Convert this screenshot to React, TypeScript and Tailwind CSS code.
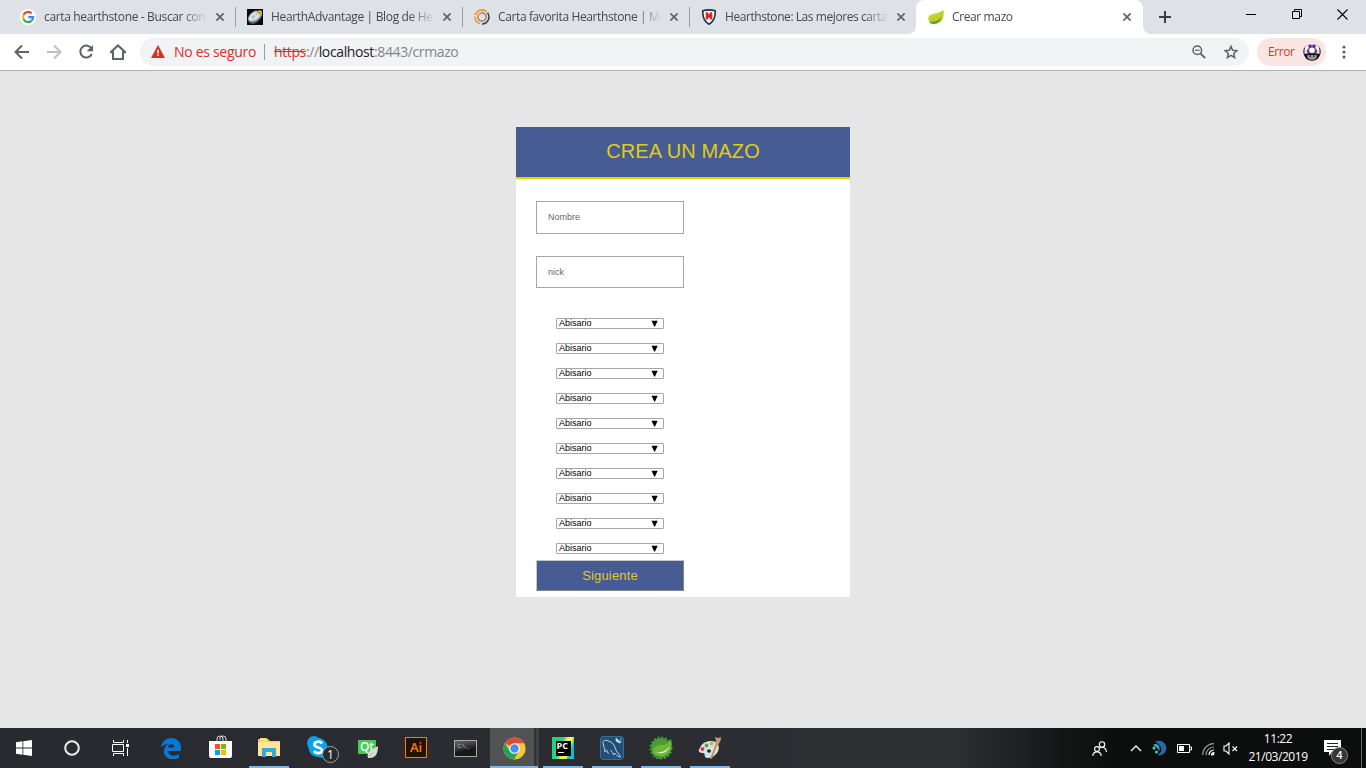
import React from "react";

const Close = () => (
  <svg width="8" height="8" viewBox="0 0 8 8" className="shrink-0" stroke="#5f6368" strokeWidth="1.7">
    <path d="M.4 .4 7.6 7.6M7.6 .4 .4 7.6" />
  </svg>
);

const GoogleIcon = () => (
  <svg width="16" height="16" viewBox="0 0 16 16" fill="none" strokeWidth="2.2">
    <circle cx="8" cy="8" r="8" fill="#fff" />
    <path d="M11.6 4.400A5.100 5.100 0 0 0 3.500 5.700" stroke="#ea4335" />
    <path d="M3.500 5.700a5.100 5.100 0 0 0 0 4.600" stroke="#fbbc05" />
    <path d="M3.500 10.300a5.100 5.100 0 0 0 7.900 1.500" stroke="#34a853" />
    <path d="M11.400 11.800A5.100 5.100 0 0 0 13.100 8.200H8.200" stroke="#4285f4" />
  </svg>
);

const StoneIcon = () => (
  <svg width="16" height="16" viewBox="0 0 16 16">
    <path fill="#080808" d="M0 0h16v16H0z" />
    <path d="M1 9Q3 3 9 1.500L14 3l1 3q-2 6-9 7.500Q1 15 1 9Z" fill="#a9b1b5" />
    <path d="M2 9Q4 4 9 3l4 3-3 4-7 2z" fill="#dce6ea" />
    <path d="m4 8 3-2 2 1-3 3zM9 4l2 1-2 2z" fill="#9fc4d6" />
    <path d="M10 2l3-1 2 1v4l-3-1z" fill="#c9a52a" />
    <path d="m2 12 4 1q5-1 8-6-1 6-8 8-4 0-4-3z" fill="#555b60" />
  </svg>
);

const RingIcon = () => (
  <svg width="16" height="16" viewBox="0 0 16 16" fill="none" strokeWidth="1.5">
    <path d="M6 14.6A7 7 0 0 1 1 7.500M1.200 6A7 7 0 0 1 12.600 2.700" stroke="#f7941d" />
    <path d="M13.500 3.800A7 7 0 0 1 8 15" stroke="#3b3b3b" />
    <circle cx="8" cy="8" r="4.100" stroke="#8b8680" />
    <path d="M3.900 8A4.100 4.100 0 0 1 8 3.900" stroke="#f7a13b" />
  </svg>
);

const ShieldIcon = () => (
  <svg width="16" height="16" viewBox="0 0 16 16">
    <path d="M1.800 1.800Q8 0 14.200 1.800q.6 9.700-6.200 13.400Q1.200 11.500 1.800 1.800Z" fill="#fff" stroke="#14304d" strokeWidth="1.600" />
    <path d="M4.700 3.300h2.100L8 5.800l1.200-2.500h2.100v7.200H9.100V8.200L8 9.500 6.900 8.200v2.300H4.700z" fill="#e2231a" />
  </svg>
);

const LeafIcon = () => (
  <svg width="16" height="16" viewBox="0 0 16 16">
    <path d="M15.300 .5c1.500 7.200-1 13.800-7.400 14.200-4 .3-7-.9-7.500-4.200C-.4 2.800 11.500 6 15.300.5Z" fill="#bfd02c" />
    <path d="M1.500 12.800c5.700.3 9.500-1.300 12.100-5-1.500 5.300-5.700 8.300-11 6.700Z" fill="#5b9e32" />
    <path d="M1 8.500C3 5 10 6.500 14 3 10 7 4 6 1 8.500Z" fill="#d9e341" />
  </svg>
);

type TabProps = { icon: React.ReactNode; title: string; spacing: string; divider?: boolean };
const Tab = ({ icon, title, spacing, divider = true }: TabProps) => (
  <div className="relative flex h-[34px] w-[227px] items-center pl-[11px] pr-[12px]">
    <span className="flex shrink-0">{icon}</span>
    <div className="ml-2 min-w-0 flex-1 whitespace-nowrap mask-[linear-gradient(to_right,#000_138px,transparent_164px)]">
      <span className={`block text-[12px] leading-[18px] text-[#45494d] ${spacing}`}>{title}</span>
    </div>
    <span className="ml-[4px] flex"><Close /></span>
    {divider && <span className="absolute right-0 top-[7px] h-5 w-px bg-[#9a9da1]" />}
  </div>
);

const Mushroom = () => (
  <svg width="18" height="18" viewBox="0 0 18 18">
    <circle cx="9" cy="9" r="8.700" fill="#171419" />
    <path d="M1.500 11V7A7.500 7.500 0 0 1 16.500 7v4z" fill="#f4f0f7" />
    <path d="M5 2 8 1.300 9 3l1-1.700L13 2l-.8 3 2.300 3-1.700 3H5.200L3.500 8l2.300-3z" fill="#6d2f96" />
    <circle cx="9" cy="7.300" r="2.800" fill="#fff" />
    <path d="M2 10.500h14v1.700H2z" fill="#171419" />
    <path d="M4.500 12h9v2.500l-2 2h-5l-2-2z" fill="#aaa" />
    <path d="M6.700 12h1.200v2.500H6.700zM10.100 12h1.200v2.500h-1.200z" fill="#171419" />
  </svg>
);

const Toolbar = () => (
  <div className="flex h-[37px] items-center border-b border-[#b0b0b0] bg-white">
    <svg className="ml-[14px]" width="16" height="16" viewBox="0 0 16 16" fill="none" stroke="#5f6368" strokeWidth="2"><path d="M15 8H2M8 1.500 1.500 8 8 14.500" /></svg>
    <svg className="ml-4" width="16" height="16" viewBox="0 0 16 16" fill="none" stroke="#bdbfc2" strokeWidth="2"><path d="M1 8h13M8 1.500 14.500 8 8 14.500" /></svg>
    <svg className="ml-4" width="16" height="16" viewBox="0 0 16 16" fill="none" stroke="#5f6368" strokeWidth="2"><path d="M13.600 4.700A6 6 0 1 0 13.800 10" /><path d="M15 1v6.300H8.700z" fill="#5f6368" stroke="none" /></svg>
    <svg className="ml-4" width="16" height="16" viewBox="0 0 16 16" fill="none" stroke="#5f6368" strokeWidth="2"><path d="M.7 8.200 8 1.400l7.300 6.800H13V15H3V8.200z" /></svg>
    <div className="ml-[14px] flex h-7 w-[1109px] items-center rounded-full bg-[#f1f3f4] pl-[11px] text-[14px] leading-5">
      <svg className="-mt-px" width="14" height="13" viewBox="0 0 14 13"><path d="M7 0 14 13H0z" fill="#d93025" /><path d="M6.200 4.800h1.600v3.600H6.200zm0 4.700h1.600V11H6.200z" fill="#fff" /></svg>
      <span className="ml-[9px] w-[82px] whitespace-nowrap tracking-[-0.300px] text-[#d93025]">No es seguro</span>
      <span className="ml-[8px] h-4 w-px bg-[#9a9da1]" />
      <span className="ml-[9px] whitespace-nowrap tracking-[-0.380px] text-[#80868b]">
        <span className="text-[#d93025] line-through">https</span>://<span className="text-[#202124]">localhost</span>:8443/crmazo
      </span>
      <svg className="ml-auto" width="14" height="14" viewBox="0 0 14 14" fill="none" stroke="#5f6368" strokeWidth="1.500"><circle cx="5.300" cy="5.300" r="4.300" /><path d="M3 5.300h4.600" strokeWidth="1.200" /><path d="m8.500 8.500 4.700 4.700" strokeWidth="1.900" /></svg>
      <svg className="ml-[18px] mr-[11px]" width="14" height="14" viewBox="0 0 14 14" fill="none" stroke="#5f6368" strokeWidth="1.500"><path d="m7 1.300 1.600 3.900 4.300.4-3.200 2.800.9 4.200L7 10.400l-3.600 2.200.9-4.200L1.100 5.600l4.300-.4z" /></svg>
    </div>
    <div className="ml-[8px] flex h-7 w-[69px] items-center rounded-full bg-[#fbe5e3] pl-[11px] text-[12px] text-[#d03a30]">
      <span className="w-[26px] whitespace-nowrap tracking-[-0.400px]">Error</span>
      <span className="ml-[9px]"><Mushroom /></span>
    </div>
    <svg className="ml-[16px]" width="4" height="14" viewBox="0 0 4 14" fill="#5f6368"><circle cx="2" cy="2" r="1.600" /><circle cx="2" cy="7" r="1.600" /><circle cx="2" cy="12" r="1.600" /></svg>
  </div>
);

const Browser = () => (
  <header className="font-['Open_Sans','Noto_Sans',sans-serif]">
    <div className="flex h-[34px] bg-[#dee1e6] pl-[9px]">
      <Tab icon={<GoogleIcon />} title="carta hearthstone - Buscar con" spacing="tracking-[-0.350px]" />
      <Tab icon={<StoneIcon />} title="HearthAdvantage | Blog de He" spacing="tracking-[-0.340px]" />
      <Tab icon={<RingIcon />} title="Carta favorita Hearthstone | Me" spacing="tracking-[-0.380px]" />
      <Tab icon={<ShieldIcon />} title="Hearthstone: Las mejores carta" spacing="tracking-[-0.430px]" divider={false} />
      <div className="relative ml-[-1px] flex w-[227px] shrink-0 rounded-t-[8px] bg-white pl-px">
        <svg className="absolute -left-2 bottom-0" width="8" height="8"><path d="M8 0v8H0A8 8 0 0 0 8 0" fill="#fff" /></svg>
        <Tab icon={<LeafIcon />} title="Crear mazo" spacing="tracking-[-0.380px]" divider={false} />
        <svg className="absolute -right-2 bottom-0" width="8" height="8"><path d="M0 0v8h8A8 8 0 0 1 0 0" fill="#fff" /></svg>
      </div>
      <svg className="ml-[16px] mt-[11px]" width="12" height="12" stroke="#3c4043" strokeWidth="2"><path d="M6 0v12M0 6h12" /></svg>
      <div className="ml-auto flex">
        <svg className="mr-[36px] mt-[14px]" width="10" height="1"><path d="M0 0h10v1H0z" /></svg>
        <svg className="mr-[35px] mt-[9px]" width="10" height="10" fill="none" stroke="#000"><path d="M.5 2.500h7v7h-7zM2.500 2.500v-2h7v7h-2" /></svg>
        <svg className="mr-[18px] mt-[9px]" width="11" height="11" stroke="#000" strokeWidth="1.100"><path d="m.5.5 10 10M10.500.5l-10 10" /></svg>
      </div>
    </div>
    <Toolbar />
  </header>
);

const DeckForm = () => (
  <form className="h-[470px] w-[334px] bg-white font-['Liberation_Sans',Arial,sans-serif]">
    <h1 className="h-[52px] border-b-2 border-[#e6d200] bg-[#465c93] text-center text-[20px] leading-[48px] tracking-[0.120px] text-[#e0cc16]">CREA UN MAZO</h1>
    <div className="flex w-[188px] flex-col px-5 pt-[22px]">
      <input placeholder="Nombre" className="mb-[22px] h-[33px] w-[148px] border border-[#a6a6a6] px-[11px] pb-px text-[9px] placeholder:text-[#686868]" />
      <input placeholder="nick" className="mb-[30px] h-8 w-[148px] border border-[#a6a6a6] px-[11px] text-[9px] placeholder:text-[#686868]" />
      <div className="mx-5 flex flex-col gap-[14px]">
        {Array.from({ length: 10 }, (_, i) => (
          <button type="button" key={i} className="flex h-[11px] w-[108px] items-center justify-between rounded-[1px] border border-[#a6a6a6] pl-[2px] pr-[5px] text-[9px] leading-[9px] text-black">
            <span>Abisario</span>
            <svg className="-mt-px" width="7" height="7" viewBox="0 0 7 7"><path d="M.5 .7h6.200L4 6.400H3.200z" /></svg>
          </button>
        ))}
      </div>
      <button type="button" className="mt-[6px] h-[31px] w-[148px] border border-b-[#858585] border-l-[#c8c8c8] border-r-[#858585] border-t-[#c8c8c8] bg-[#465c93] text-[13px] leading-[29px] tracking-[0.150px] text-[#e0cc16]">Siguiente</button>
    </div>
  </form>
);

const ExplorerIcon = () => (
  <svg width="22" height="20" viewBox="0 0 22 20"><path d="M0 1h10l2 2h10v15H0z" fill="#f3c64d" /><path d="M2 0h7v4H2z" fill="#fbdc75" /><path d="M0 4h22v14H0z" fill="#ffe698" /><path d="M4 10h14v9h-4v-5H8v5H4z" fill="#38a8db" /></svg>
);
const SkypeIcon = () => (
  <div className="relative ml-[2px] h-6 w-[24px]">
    <svg width="22" height="23" viewBox="0 0 22 23"><circle cx="7" cy="7" r="7" fill="#0d9fe8" /><circle cx="15" cy="15.500" r="6.500" fill="#0792dc" /><circle cx="11" cy="11.500" r="9.500" fill="#08a4ed" /><path d="M15 7.500C13 4.800 7.500 5.200 7.500 8.500c0 4 7.500 2 7.500 6 0 3.200-6 3.500-8 .5" fill="none" stroke="#fff" strokeWidth="2.700" /></svg>
    <span className="absolute left-[15px] top-[10px] flex size-[17px] items-center justify-center rounded-full border border-[#a0a0a0] bg-[#292a2e] text-[12px] text-white">1</span>
  </div>
);
const QtIcon = () => (
  <div className="relative ml-[2px] mt-[3px] h-[19px] w-[20px]">
    <div className="h-[14px] w-[18px] bg-[#41cd52] text-center text-[12px] font-semibold leading-[13px] text-white">Qt</div>
    <svg className="absolute left-[9px] top-[6px]" width="12" height="13" viewBox="0 0 12 13"><path d="M1 12c-2-7 4-8 10-12 0 7-2 12-8 12z" fill="#d9ddda" /><path d="m2 11 4-5" stroke="#a9b1ab" strokeWidth=".7" /></svg>
  </div>
);
const ChromeIcon = () => (
  <svg width="23" height="23" viewBox="0 0 24 24"><circle cx="12" cy="12" r="11.500" fill="#f9c83a" /><path d="M12 12 2 6.200A11.500 11.500 0 0 1 22 6.500H12z" fill="#dd4b3e" /><path d="M2 6.200A11.500 11.500 0 0 0 11.500 23.500l5-8.700L7 14.500z" fill="#22a35a" /><circle cx="12" cy="12" r="5.500" fill="#fff" /><circle cx="12" cy="12" r="4.400" fill="#4b8cf5" /></svg>
);
const PyCharmIcon = () => (
  <div className="relative flex size-[22px] items-center justify-center bg-[linear-gradient(110deg,#20cf78_0%,#21d789_40%,#f7ef4b_55%,#f7ef4b_70%,#08bed3_80%,#16b9de)]">
    <div className="flex size-[15px] flex-col bg-black pl-[1px] text-[9px] font-bold leading-[10px] text-white">PC<span className="ml-px mt-[1px] h-px w-[6px] bg-white" /></div>
  </div>
);
const DolphinIcon = () => (
  <svg width="24" height="24" viewBox="0 0 24 24" fill="none" stroke="#d3e0e9"><path d="M3 .5h18q2.500 0 2.500 3v17q0 3-3 3h-17q-3 0-3-3v-17q0-3 2.500-3z" fill="#214f78" stroke="#397095" /><path d="M4.500 16c1-2-.5-4-1-7-.5-2-1-3 0-4s3-1 5 0c4 1 6 4 7 8 1 3 4 5 5 8-3 0-4-2-6-4l-1 2c0-2-2-3-3-5M4.500 16l2-2 2 4" strokeWidth=".9" /><path d="m16 2 5 4.500-1.500.5L16 5zM21 2v4" fill="#d3e0e9" strokeWidth=".6" /></svg>
);
const SpringIcon = () => (
  <svg width="24" height="24" viewBox="0 0 24 24"><circle cx="12" cy="12" r="10" fill="#4a9c34" /><circle cx="12" cy="12" r="10.500" fill="none" stroke="#4a9c34" strokeWidth="2" strokeDasharray="2 1.800" /><path d="M22 2.500c2 10-1 18.500-9 19.500-5 .6-8-2-9-5-1-6 4-8 10-8 4 0 7-3 8-6.500z" fill="#70b638" /><path d="M7 16.500c7 0 11-2 13.500-6.500-1.500 6-7 8.500-13.500 6.500z" fill="#f0f6e9" /><path d="M5 18c6 4 13 3 16-4-2 8-11 12-16 6z" fill="#3b9233" /></svg>
);
const PaintIcon = () => (
  <svg width="24" height="24" viewBox="0 0 24 24"><path d="M2 12C4 5 15 3 19 7c5 5-1 15-9 15-5 0-2-4-4.500-5C2 17-1 16 2 12z" fill="#cfe5f2" /><ellipse cx="11" cy="15" rx="2" ry="1.800" fill="#292a2e" /><circle cx="4.500" cy="13" r="1.900" fill="#df3b31" /><circle cx="8.500" cy="9.500" r="1.900" fill="#61a43a" /><circle cx="13.500" cy="7.500" r="1.900" fill="#e9a72e" /><path d="m12 23 5.500-15 2 1L14 22.500z" fill="#e18b35" /><path d="m17 9 1-4 -1-4 3 1 3-1-.5 4L19.500 10z" fill="#c29b72" /></svg>
);

type AppProps = { children: React.ReactNode; running?: boolean };
const Slot = ({ children, running }: AppProps) => (
  <div className="relative flex h-10 w-[49px] items-center justify-center pr-px">
    {children}
    {running && <span className="absolute bottom-0 left-[4px] h-[2px] w-[40px] bg-[#76b9ed]" />}
  </div>
);

const Taskbar = () => (
  <footer className="relative flex h-10 bg-[linear-gradient(to_right,#292a2f_0,#2d2e32_70%,#131515_78%,#0c0d0d_82%)] font-['Open_Sans','Noto_Sans',sans-serif] text-white">
    <div className="flex w-12 items-center justify-center"><svg width="16" height="16" viewBox="0 0 16 16" fill="#fff"><path d="M0 2.300 6.500 1.300v6.200H0zM7.300 1.200 16 0v7.500H7.300zM0 8.400h6.500v6.300L0 13.700zm7.300 0H16V16l-8.700-1.200z" /></svg></div>
    <div className="flex w-12 items-center justify-center"><svg width="16" height="16"><circle cx="8" cy="8" r="6.800" fill="none" stroke="#ececec" strokeWidth="2" /></svg></div>
    <div className="flex w-[51px] items-center justify-center pr-[3px]"><svg width="17" height="16" fill="none" stroke="#fff"><path d="M1.500 0v2.500h10V0M1.500 16v-2.500h10V16M.5 4.500h11v7H.5zM15.500 0v3M15.500 8v8" /><path d="M14 4h3v3h-3z" fill="#fff" stroke="none" /></svg></div>
    <Slot><svg width="20" height="21" viewBox="0 0 20 21"><path d="M0 9C2-3 20-3 20 10v3H7c0 5 7 6 11 3v4C9 24 2 19 3 12c.5-3 2-5 5-6-3 0-6 1-8 3zm7 .5h6.500C13 5 7.500 5 7 9.500z" fill="#0878d6" fillRule="evenodd" /></svg></Slot>
    <Slot><svg className="-mt-[3px]" width="23" height="23" viewBox="0 0 23 23"><path d="M8 7V4q0-3 3-3t3 3v3M11 5V3q0-2 3-2 3 0 3 3v3" fill="none" stroke="#ddd" /><path d="M0 6h23v15q0 2-2 2H2q-2 0-2-2z" fill="#fff" /><path d="M6 9h5v5H6z" fill="#f15225" /><path d="M12 9h5v5h-5z" fill="#7db900" /><path d="M6 15h5v5H6z" fill="#00a3ee" /><path d="M12 15h5v5h-5z" fill="#fdb900" /></svg></Slot>
    <Slot running><ExplorerIcon /></Slot>
    <Slot><SkypeIcon /></Slot>
    <Slot><QtIcon /></Slot>
    <Slot><div className="mb-[2px] flex h-[21px] w-[22px] items-center justify-center border border-[#ff7c00] bg-[#241203] text-[13px] font-semibold leading-none text-[#ff7c00]">Ai</div></Slot>
    <Slot><div className="h-[17px] w-[23px] border border-[#a9a9a9] bg-[linear-gradient(165deg,#666_0,#333_45%,#171717_60%)] pl-[3px] text-[6px] leading-[10px] text-[#bbb]">C:\._</div></Slot>
    <div className="relative flex w-[49px] items-center justify-center bg-[linear-gradient(to_right,#505254_0_44px,#303135_44px_46px,#404145_46px)] pr-px"><ChromeIcon /><span className="absolute bottom-0 left-0 h-[2px] w-[48px] bg-[#76b9ed]" /></div>
    <Slot running><PyCharmIcon /></Slot>
    <Slot running><DolphinIcon /></Slot>
    <Slot running><SpringIcon /></Slot>
    <Slot running><PaintIcon /><span className="absolute bottom-0 left-[35px] h-[2px] w-[9px] bg-[#5b93bd]" /></Slot>
    <div className="ml-auto flex items-center">
      <svg className="mr-[23px]" width="15" height="15" fill="none" stroke="#fff" strokeWidth="1.100"><circle cx="10" cy="3.500" r="2.700" /><circle cx="5" cy="8" r="2.400" /><path d="M.8 15c.3-5.500 8.100-5.500 8.400 0M8 7c2.500-1.500 6.200-.5 6.500 4" /></svg>
      <svg className="mr-[10px]" width="12" height="8" fill="none" stroke="#fff" strokeWidth="1.300"><path d="m1 7 5-5 5 5" /></svg>
      <svg className="mr-[10px]" width="15" height="16" viewBox="0 0 15 16"><path d="M3 2C9-2 16 4 14 10c-1 4-4 6-9 5 7-3 5-10-2-13z" fill="#2868a5" /><path d="M1 5C6 2 9 7 7 12 7 8 4 7 1 5z" fill="#35aacd" /><circle cx="2" cy="8" r="1.500" fill="#47dc9a" /><circle cx="4.500" cy="12" r="1.600" fill="#2ecda6" /></svg>
      <svg className="mr-[10px] mt-px" width="15" height="10"><path d="M.5.500h12v8H.5zM13 3h1.500v3H13" fill="none" stroke="#fff" /><path d="M2 2h5v5H2z" fill="#fff" /></svg>
      <svg className="mr-[8px] mt-[3px]" width="13" height="13" fill="none" strokeWidth="1.200"><path d="M.7 12A11.300 11.300 0 0 1 12 .7M4 12a8 8 0 0 1 8-8" stroke="#96999a" /><path d="M7 12a5 5 0 0 1 5-5M9.500 12.500a3 3 0 0 1 3-3" stroke="#fff" /><circle cx="11" cy="11" r="1.400" fill="#fff" /></svg>
      <svg className="mr-[10px]" width="15" height="13" fill="none" stroke="#fff"><path d="M1 4h2L6 1v11L3 9H1zM9.500 4.500l4.500 4.500M14 4.500 9.500 9" strokeWidth="1.100" /></svg>
      <div className="flex w-[60px] flex-col items-center text-[12px] leading-[18px] tracking-[-0.450px]"><span>11:22</span><span className="whitespace-nowrap">21/03/2019</span></div>
      <div className="relative ml-[16px] mr-[13px] h-6 w-[24px]">
        <svg className="mt-[4px]" width="17" height="17"><path d="M0 0h17v12H8l-3 4v-4H0z" fill="#fff" /><path d="M3 3h11v1H3zM3 6h11v1H3zM3 9h8v1H3z" fill="#202121" /></svg>
        <span className="absolute left-[7px] top-[11px] flex size-[17px] items-center justify-center rounded-full border border-[#898989] bg-[#353636] text-[11px] font-semibold">4</span>
      </div>
      <span className="mr-[4px] h-10 w-px bg-[#626464]" />
    </div>
  </footer>
);

export default function App() {
  return (
    <div className="flex h-[768px] w-[1366px] flex-col overflow-hidden bg-[#e6e6e6]">
      <Browser />
      <main className="flex flex-1 items-start justify-center pt-[56px]"><DeckForm /></main>
      <Taskbar />
    </div>
  );
}
